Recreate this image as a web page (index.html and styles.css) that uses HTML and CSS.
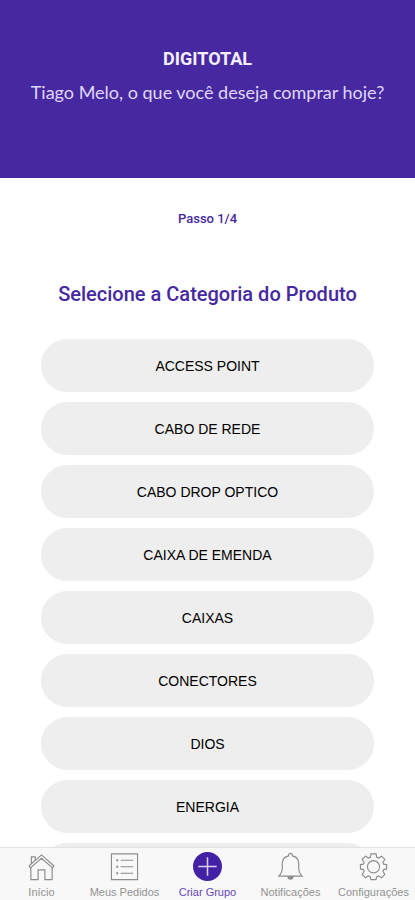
FILE: index.html
```html
<!DOCTYPE html>
<html lang="pt-BR">
<head>
<meta charset="utf-8">
<meta name="viewport" content="width=device-width, initial-scale=1">
<title>Digitotal</title>
<link rel="stylesheet" href="styles.css">
</head>
<body>
<header class="hero">
  <h1 class="brand">DIGITOTAL</h1>
  <p class="greeting">Tiago Melo, o que você deseja comprar hoje?</p>
</header>
<main class="content">
  <p class="step">Passo 1/4</p>
  <h2 class="title">Selecione a Categoria do Produto</h2>
  <div class="categories">
    <button class="category" type="button">ACCESS POINT</button>
    <button class="category" type="button">CABO DE REDE</button>
    <button class="category" type="button">CABO DROP OPTICO</button>
    <button class="category" type="button">CAIXA DE EMENDA</button>
    <button class="category" type="button">CAIXAS</button>
    <button class="category" type="button">CONECTORES</button>
    <button class="category" type="button">DIOS</button>
    <button class="category" type="button">ENERGIA</button>
    <button class="category" type="button" aria-label="Mais categorias"></button>
  </div>
</main>
<nav class="tabs">
  <a class="tab" href="#inicio">
    <svg class="icon" viewBox="0 0 30 30" aria-hidden="true"><path d="M2 14.500 15 3 28 14.500M4.500 12V5H8.500V8.500M2 14.500 3.500 16.500 15 6.500 26.500 16.500 28 14.500M4 16.500V28.500H11.500V18.500H18.500V28.500H26V16.500"/></svg>
    <span>Início</span>
  </a>
  <a class="tab" href="#pedidos">
    <svg class="icon" viewBox="0 0 30 30" aria-hidden="true"><path d="M1.500 2H28.500V28.500H1.500ZM11 8.500H24M11 15.300H24M11 22H24"/><path class="dots" d="M6.500 8.500H8.500M6.500 15.300H8.500M6.500 22H8.500"/></svg>
    <span>Meus Pedidos</span>
  </a>
  <a class="tab tab-active" href="#grupo" aria-current="page">
    <svg class="icon" viewBox="0 0 30 30" aria-hidden="true"><circle class="disc" cx="15" cy="15" r="15"/><path class="plus" d="M15 5.500V24.500M5.500 15H24.500"/></svg>
    <span>Criar Grupo</span>
  </a>
  <a class="tab" href="#notificacoes">
    <svg class="icon" viewBox="0 0 30 30" aria-hidden="true"><path d="M13 4V3.500A2 2 0 0 1 17 3.500V4C21.500 5 23.500 8 23.500 12V17.500C23.500 21 25 22.500 27 25H3C5 22.500 6.500 21 6.500 17.500V12C6.500 8 8.500 5 13 4Z"/><path class="clapper" d="M12.500 25.500A2.500 2.500 0 0 0 17.500 25.500Z"/></svg>
    <span>Notificações</span>
  </a>
  <a class="tab" href="#configuracoes">
    <svg class="icon" viewBox="0 0 30 30" aria-hidden="true"><path d="M12.400 2H17.600L18.400 5.500 20.200 6.300 23.300 4.300 26.700 7.700 24.700 10.800 25.500 12.600 28.500 13V17.500L25.500 18.200 24.700 20 26.700 23.300 23.300 26.700 20.200 24.700 18.400 25.500 17.600 28.500H12.400L11.600 25.500 9.800 24.700 6.700 26.700 3.300 23.300 5.300 20 4.500 18.200 1.500 17.500V13L4.500 12.600 5.300 10.800 3.300 7.700 6.700 4.300 9.800 6.300 11.600 5.500Z"/><circle cx="15" cy="15.300" r="6.300"/></svg>
    <span>Configurações</span>
  </a>
</nav>
</body>
</html>
```
FILE: styles.css
```css
* {
  box-sizing: border-box;
}

body {
  display: flex;
  flex-direction: column;
  height: 100vh;
  margin: 0;
  background: #fff;
  color: #111;
  font-family: "Liberation Sans", Arial, sans-serif;
}

h1,
h2,
p {
  margin: 0;
}

.hero {
  flex: none;
  padding: 48px 16px 72px;
  background: #4628a1;
  color: #e0d7f8;
  text-align: center;
}

.brand {
  font: bold 18px/22px Roboto, sans-serif;
  color: #f4efff;
}

.greeting {
  margin-top: 8px;
  font: 400 18px/28px Lato, sans-serif;
  white-space: nowrap;
}

.content {
  flex: 1;
  min-height: 0;
  padding: 33px 41px 0;
  overflow: hidden;
  text-align: center;
}

.step {
  color: #4628a1;
  font: 500 13px/16px Roboto, sans-serif;
}

.title {
  margin-top: 55px;
  color: #4628a1;
  font: 500 20px/24px Roboto, sans-serif;
  white-space: nowrap;
}

.categories {
  display: flex;
  flex-direction: column;
  gap: 10px;
  margin-top: 33px;
}

.category {
  flex: none;
  height: 53px;
  padding: 0 16px;
  border: 0;
  border-radius: 27px;
  background: #eee;
  color: #000;
  font: 14px/18px "Liberation Sans", Arial, sans-serif;
}

.tabs {
  display: grid;
  flex: none;
  grid-template-columns: repeat(5, 1fr);
  padding: 4px 0 1px;
  border-top: 1px solid #e2e2e2;
  background: #f8f8f8;
}

.tab {
  display: flex;
  flex-direction: column;
  align-items: center;
  gap: 4px;
  color: #929292;
  font-size: 11px;
  line-height: 14px;
  text-decoration: none;
  white-space: nowrap;
}

.tab-active {
  color: #6547b8;
}

.icon {
  width: 29px;
  height: 29px;
  fill: none;
  stroke: #8c8c8c;
  stroke-width: 1.2;
}

.dots {
  stroke-width: 2;
}

.disc {
  fill: #4221a5;
  stroke: none;
}

.plus {
  stroke: #d9cff5;
  stroke-width: 1.6;
}

.clapper {
  fill: #8c8c8c;
}
```
